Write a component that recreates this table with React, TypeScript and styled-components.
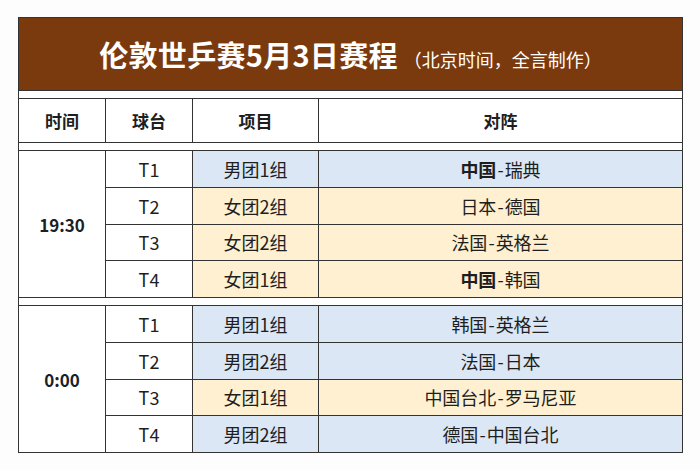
import styled, { createGlobalStyle } from "styled-components";

const GlobalStyle = createGlobalStyle`
  html, body {
    margin: 0;
    padding: 0;
    background: #fdfdfd;
  }
  body {
    font-family: "Noto Sans CJK SC", "Noto Sans", sans-serif;
    color: #1e1e1e;
  }
`;

const Page = styled.div`
  width: 700px;
  height: 470px;
  padding: 17px 0 0 18px;
  box-sizing: border-box;
`;

const Table = styled.table`
  width: 665px;
  border-collapse: collapse;
  table-layout: fixed;
  border: 1.5px solid #333;
`;

const TitleCell = styled.td`
  height: 72px;
  background: #7b3a0d;
  color: #fff;
  text-align: center;
  border: 1.5px solid #333;
  padding: 0;
  line-height: 1.2;
`;

const MainTitle = styled.span`
  font-size: 29px;
  font-weight: 700;
  letter-spacing: 0.3px;
`;

const SubTitle = styled.span`
  font-size: 18px;
  font-weight: 400;
  margin-left: 6px;
`;

const Spacer = styled.td`
  height: 7px;
  padding: 0;
  background: #fff;
  border-left: 1.5px solid #333;
  border-right: 1.5px solid #333;
`;

const HeadCell = styled.th`
  height: 43px;
  padding: 0;
  font-size: 17px;
  font-weight: 700;
  background: #fff;
  border: 1.5px solid #333;
`;

const Cell = styled.td<{ $tone?: "blue" | "yellow" | "white" }>`
  height: 35.75px;
  padding: 0;
  text-align: center;
  font-size: 18px;
  border: 1.5px solid #333;
  background: ${(p) =>
    p.$tone === "blue" ? "#dbe7f5" : p.$tone === "yellow" ? "#fef0d0" : "#fff"};
`;

const TimeCell = styled(Cell)`
  font-weight: 700;
  font-size: 17px;
`;

const Strong = styled.b`
  font-weight: 700;
`;

const Dash = styled.span`
  margin: 0 1px;
`;

interface Match {
  table: string;
  event: string;
  tone: "blue" | "yellow";
  home: string;
  away: string;
  homeBold?: boolean;
}

interface Session {
  time: string;
  matches: Match[];
}

const sessions: Session[] = [
  {
    time: "19:30",
    matches: [
      { table: "T1", event: "男团1组", tone: "blue", home: "中国", away: "瑞典", homeBold: true },
      { table: "T2", event: "女团2组", tone: "yellow", home: "日本", away: "德国" },
      { table: "T3", event: "女团2组", tone: "yellow", home: "法国", away: "英格兰" },
      { table: "T4", event: "女团1组", tone: "yellow", home: "中国", away: "韩国", homeBold: true },
    ],
  },
  {
    time: "0:00",
    matches: [
      { table: "T1", event: "男团1组", tone: "blue", home: "韩国", away: "英格兰" },
      { table: "T2", event: "男团2组", tone: "blue", home: "法国", away: "日本" },
      { table: "T3", event: "女团1组", tone: "yellow", home: "中国台北", away: "罗马尼亚" },
      { table: "T4", event: "男团2组", tone: "blue", home: "德国", away: "中国台北" },
    ],
  },
];

function App() {
  return (
    <Page>
      <GlobalStyle />
      <Table>
        <colgroup>
          <col style={{ width: 87 }} />
          <col style={{ width: 87 }} />
          <col style={{ width: 126 }} />
          <col />
        </colgroup>
        <tbody>
          <tr>
            <TitleCell colSpan={4}>
              <MainTitle>伦敦世乒赛5月3日赛程</MainTitle>
              <SubTitle>（北京时间，全言制作）</SubTitle>
            </TitleCell>
          </tr>
          <tr>
            <Spacer colSpan={4} />
          </tr>
          <tr>
            <HeadCell>时间</HeadCell>
            <HeadCell>球台</HeadCell>
            <HeadCell>项目</HeadCell>
            <HeadCell>对阵</HeadCell>
          </tr>
          {sessions.map((s) => (
            <>
              <tr key={s.time + "-gap"}>
                <Spacer colSpan={4} />
              </tr>
              {s.matches.map((m, i) => (
                <tr key={s.time + m.table}>
                  {i === 0 && <TimeCell rowSpan={4}>{s.time}</TimeCell>}
                  <Cell>{m.table}</Cell>
                  <Cell $tone={m.tone}>{m.event}</Cell>
                  <Cell $tone={m.tone}>
                    {m.homeBold ? <Strong>{m.home}</Strong> : m.home}
                    <Dash>-</Dash>
                    {m.away}
                  </Cell>
                </tr>
              ))}
            </>
          ))}
        </tbody>
      </Table>
    </Page>
  );
}

export default App;
